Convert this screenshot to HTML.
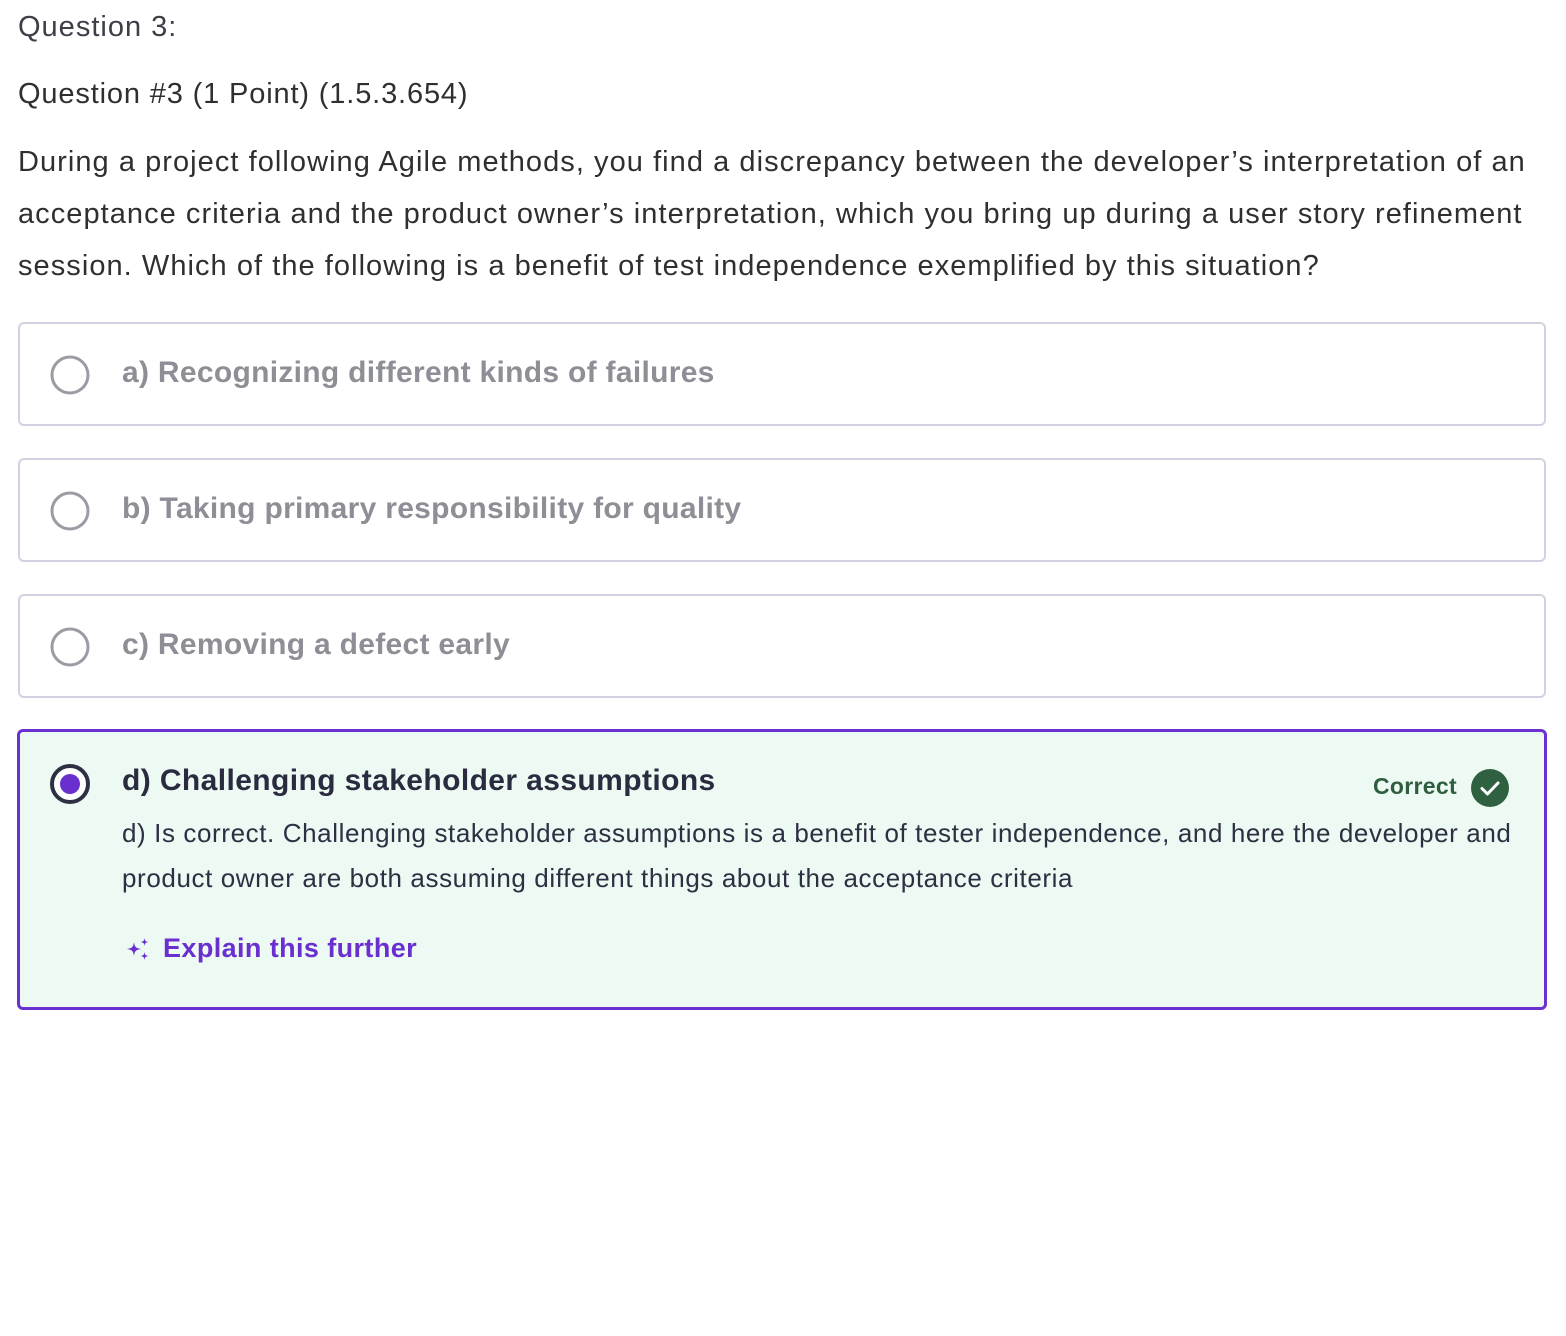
<!DOCTYPE html>
<html><head><meta charset="utf-8">
<style>
*{box-sizing:border-box;margin:0;padding:0}
body{width:1566px;height:1336px;background:#fff;font-family:"Liberation Sans",sans-serif;color:#2d2f31;position:relative;overflow:hidden}
.abs{position:absolute;white-space:nowrap}
.box{position:absolute;left:18px;width:1528px;height:104px;border:2px solid #d1d2e0;border-radius:6px;background:#fff}
.box .c{position:absolute;left:30px;top:31px}
.box .t{position:absolute;left:102px;top:32px;font-size:30px;font-weight:bold;color:#8d8e96;white-space:nowrap;letter-spacing:0.3px}
</style></head><body>
<div class="abs" style="left:18px;top:11px;font-size:29px;color:#3d3f48;letter-spacing:1px">Question 3:</div>
<div class="abs" style="left:18px;top:78px;font-size:29px;color:#2d2f31;letter-spacing:0.85px">Question #3 (1 Point) (1.5.3.654)</div>
<div class="abs" style="left:18px;top:136px;font-size:29px;line-height:52px;color:#2d2f31;letter-spacing:1.05px">During a project following Agile methods, you find a discrepancy between the developer’s interpretation of an<br>acceptance criteria and the product owner’s interpretation, which you bring up during a user story refinement<br>session. Which of the following is a benefit of test independence exemplified by this situation?</div>

<div class="box" style="top:322px"><svg class="c" width="40" height="40"><circle cx="20" cy="20" r="18" fill="none" stroke="#9b9ca3" stroke-width="3"/></svg><div class="t">a) Recognizing different kinds of failures</div></div>
<div class="box" style="top:458px"><svg class="c" width="40" height="40"><circle cx="20" cy="20" r="18" fill="none" stroke="#9b9ca3" stroke-width="3"/></svg><div class="t">b) Taking primary responsibility for quality</div></div>
<div class="box" style="top:594px"><svg class="c" width="40" height="40"><circle cx="20" cy="20" r="18" fill="none" stroke="#9b9ca3" stroke-width="3"/></svg><div class="t">c) Removing a defect early</div></div>

<div style="position:absolute;left:17px;top:729px;width:1530px;height:281px;border:3px solid #6a30d0;border-radius:6px;background:#edf9f3">
<svg style="position:absolute;left:29px;top:31px" width="42" height="42"><circle cx="21" cy="21" r="18" fill="#fff" stroke="#2d2f42" stroke-width="4"/><circle cx="21" cy="21" r="10" fill="#6a2fcf"/></svg>
<div class="abs" style="left:102px;top:32px;font-size:30px;font-weight:bold;color:#2a2b3f;letter-spacing:0.4px">d) Challenging stakeholder assumptions</div>
<div class="abs" style="left:1353px;top:41px;font-size:23px;font-weight:bold;color:#2e5e3e;letter-spacing:0.3px">Correct</div>
<svg style="position:absolute;left:1450px;top:36px" width="40" height="40"><circle cx="20" cy="20" r="19" fill="#2f6140"/><path d="M12 20.5l5.5 5.5L28 15" fill="none" stroke="#fff" stroke-width="3" stroke-linecap="round" stroke-linejoin="round"/></svg>
<div class="abs" style="left:102px;top:79px;font-size:26px;line-height:45px;color:#2d2f42;letter-spacing:0.6px">d) Is correct. Challenging stakeholder assumptions is a benefit of tester independence, and here the developer and<br>product owner are both assuming different things about the acceptance criteria</div>
<svg style="position:absolute;left:106px;top:205px" width="24" height="24" viewBox="0 0 24 24"><path d="M8 5C8.8 10 9.5 11 15 12C9.5 13 8.8 14 8 19C7.2 14 6.5 13 1 12C6.5 11 7.2 10 8 5Z" fill="#6a2fcf"/><path d="M18.5 1C19 4 19.5 4.5 22.5 5C19.5 5.5 19 6 18.5 9C18 6 17.5 5.5 14.5 5C17.5 4.5 18 4 18.5 1Z" fill="#6a2fcf"/><path d="M18.5 15C19 18 19.5 18.5 22.5 19C19.5 19.5 19 20 18.5 23C18 20 17.5 19.5 14.5 19C17.5 18.5 18 18 18.5 15Z" fill="#6a2fcf"/></svg>
<div class="abs" style="left:143px;top:201px;font-size:27px;font-weight:bold;color:#6a2fcf;letter-spacing:0.4px">Explain this further</div>
</div>
</body></html>
